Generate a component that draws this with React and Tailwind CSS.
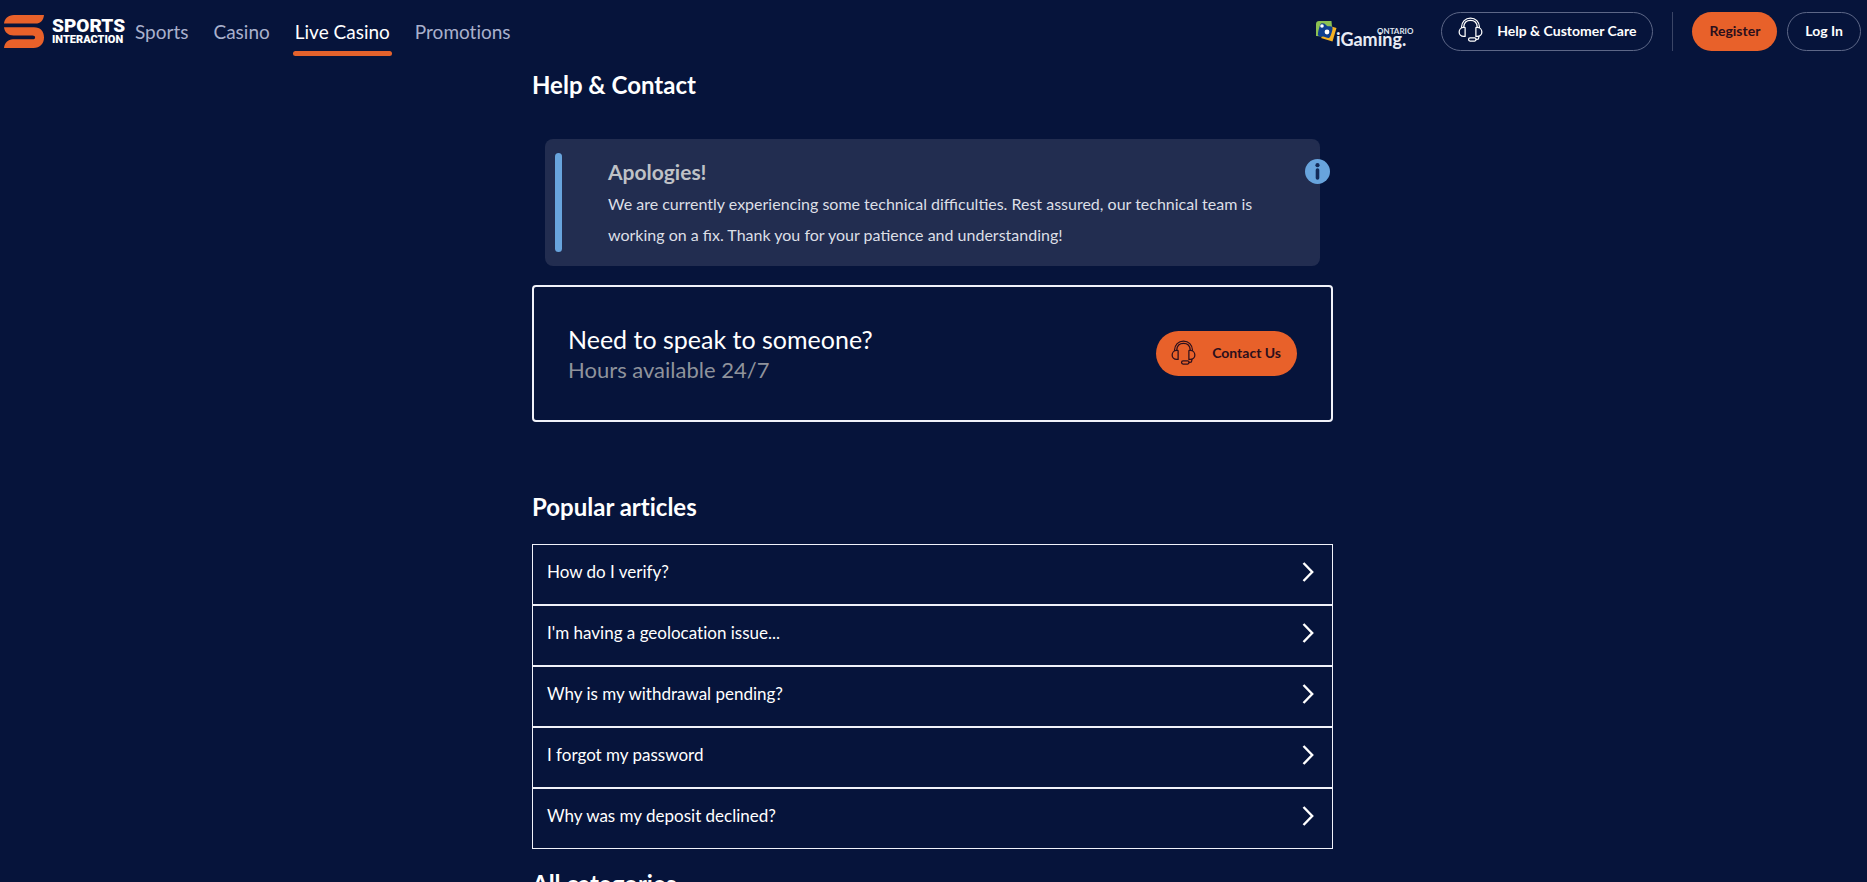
const navItems = [
  { label: "Sports" },
  { label: "Casino" },
  { label: "Live Casino", active: true },
  { label: "Promotions" },
];

const articles = [
  "How do I verify?",
  "I'm having a geolocation issue...",
  "Why is my withdrawal pending?",
  "I forgot my password",
  "Why was my deposit declined?",
];

function Headset({ className }) {
  return (
    <svg viewBox="0 0 26 26" className={className} fill="none" stroke="currentColor" strokeWidth="1.3" strokeLinejoin="round" strokeLinecap="round" aria-hidden="true">
      <path d="M3.6 10.8C3.8 4.9 7.7 1.2 13 1.2s9.200 3.700 9.400 9.600" />
      <path d="M6 10.400C6.300 6.300 9 3.600 13 3.600s6.700 2.700 7 6.800" />
      <path d="M7.400 11.400v8.800H6C3 20.200 1.200 18 1.200 15.600S3 10.800 6 10.800h.9c.3 0 .5.200.5.600z" />
      <path d="M18.600 11.400v8.800H20c3 0 4.800-2.200 4.800-4.600s-1.800-4.800-4.800-4.800h-.9c-.3 0-.5.200-.5.600z" />
      <path d="M21.600 20.200v1.300c0 1.100-.7 1.700-1.800 1.700h-1" />
      <rect x="11" y="21.800" width="7.800" height="3.200" rx="1.500" />
    </svg>
  );
}

function Brand() {
  return (
    <a href="#home" aria-label="Sports Interaction" className="flex items-center gap-2">
      <svg viewBox="0 0 40 33" className="h-[33px] w-10" fill="#e8612a" aria-hidden="true">
        <path d="M40 0H10C4 0 .4 3.600 0 8.600h31.500C36.500 8.600 39.600 5 40 0z" />
        <path d="M0 12.300h30c6.500 0 10 4 10 10.200S36 33 29.500 33H0c.5-5 4-8.700 9-8.700h19.500c1.600 0 2.600-.7 2.600-1.900s-1-1.900-2.600-1.900H9.500c-5 0-9-3-9.500-8.200z" />
      </svg>
      <span className="flex w-[72px] flex-col items-start font-['Roboto',sans-serif] whitespace-nowrap text-white">
        <span className="text-[19px] leading-[17px] font-black">SPORTS</span>
        <span className="text-[11px] leading-[12px] font-black">INTERACTION</span>
      </span>
    </a>
  );
}

function IGaming() {
  return (
    <svg viewBox="0 0 100 40" className="h-10 w-[100px]" role="img" aria-label="iGaming Ontario">
      <path d="M14 14l6.500 2-4 13.500L5 26z" fill="#f4b223" />
      <path d="M3 9h12.500l.5 6-9 9.500L0 24V12c0-1.800 1.200-3 3-3z" fill="#8cc152" />
      <path d="M5 11.500c4-1 5 2 6 2.500s5-.5 5.500 1.500-2 10-3.500 10.500-4.500-1.500-6-1.500-4.500.5-5-1.500S4 12 5 11.500z" fill="#0f3f8f" />
      <circle cx="6" cy="14" r="1.800" fill="#fff" />
      <circle cx="11" cy="20" r="2.400" fill="#fff" />
      <text x="61" y="22" fill="#dfe3ee" fontFamily="Lato, sans-serif" fontWeight="700" fontSize="8">ONTARIO</text>
      <text x="20" y="34" fill="#e8ebf4" fontFamily="Lato, sans-serif" fontWeight="700" fontSize="18">iGaming.</text>
    </svg>
  );
}

export default function App() {
  return (
    <div className="h-screen overflow-hidden bg-[#06143b] font-['Lato',sans-serif] text-white">
      <header className="flex h-[63px] items-center justify-between pr-1.5 pl-1">
        <div className="flex items-center gap-2">
          <Brand />
          <nav className="flex gap-[19px] [font-variant-ligatures:none]">
            {navItems.map((item) => (
              <a
                key={item.label}
                href="#nav"
                className={
                  item.active
                    ? "flex flex-col px-[3px] pt-3 text-[19px] leading-6 text-white"
                    : "flex flex-col px-[3px] pt-3 text-[19px] leading-6 text-[#a9b0cc]"
                }
              >
                {item.label}
                <span className={item.active ? "-mx-[2px] mt-[7px] h-[5px] rounded-full bg-[#e4622c]" : "mt-[7px] h-[5px]"} />
              </a>
            ))}
          </nav>
        </div>
        <div className="flex items-center">
          <IGaming />
          <button className="ml-[25px] flex h-[39px] items-center gap-3.5 rounded-full border border-[#5d6787] px-4 pb-0.5 text-[14px] font-bold">
            <Headset className="-mt-0.5 size-[25px]" />
            Help &amp; Customer Care
          </button>
          <div className="mx-[19px] h-[39px] w-px bg-[#3a4566]" />
          <button className="h-[39px] rounded-full bg-[#e8612a] px-[17px] pb-0.5 text-[14px] font-bold text-[#2c0f1c]">Register</button>
          <button className="ml-2.5 h-[39px] rounded-full border border-[#5d6787] px-[17px] pb-0.5 text-[14px] font-bold">Log In</button>
        </div>
      </header>

      <main className="pr-0.5">
        <div className="mx-auto max-w-[801px] [font-variant-ligatures:none]">
          <h1 className="pt-[7px] text-[24px] leading-[30px] font-bold">Help &amp; Contact</h1>

          <section className="relative mx-[13px] mt-[39px] flex gap-[46px] rounded-lg bg-[#222d50] px-2.5 py-3.5">
            <div className="w-[7px] shrink-0 rounded-full bg-[#68a4dd]" />
            <div className="pt-0.5 pr-12 pb-0.5">
              <h2 className="text-[21px] leading-[33px] font-bold text-[#bfc1c6]">Apologies!</h2>
              <p className="text-[16px] leading-[31px] text-[#dcdfe6] [font-variant-ligatures:normal]">
                We are currently experiencing some technical difficulties. Rest assured, our technical team is working on a fix. Thank you for your patience and understanding!
              </p>
            </div>
            <svg viewBox="0 0 25 25" className="absolute top-5 -right-2.5 size-[25px]" aria-hidden="true">
              <circle cx="12.500" cy="12.500" r="12.500" fill="#68a4dd" />
              <circle cx="12.500" cy="6.200" r="2.100" fill="#132a58" />
              <path d="M12.500 11v8" stroke="#132a58" strokeWidth="3.600" strokeLinecap="round" />
            </svg>
          </section>

          <section className="mt-[19px] flex h-[137px] items-center justify-between rounded border-2 border-[#f0f2fa] px-[34px]">
            <div className="pt-0.5">
              <h2 className="text-[25px] leading-[30px]">Need to speak to someone?</h2>
              <p className="text-[22px] leading-8 text-[#8f939c]">Hours available 24/7</p>
            </div>
            <button className="flex h-[45px] items-center gap-4 rounded-full bg-[#e8612a] pr-4 pb-0.5 pl-[15px] text-[14px] font-bold text-[#2c0f1c]">
              <Headset className="size-[25px]" />
              Contact Us
            </button>
          </section>

          <h2 className="mt-[70px] text-[24px] leading-[30px] font-bold">Popular articles</h2>
          <ul className="mt-[22px]">
            {articles.map((title) => (
              <li key={title}>
                <a href="#article" className="flex h-[61px] items-center justify-between border border-[#f0f2fa] pr-[18px] pb-1.5 pl-3.5 text-[17px]">
                  {title}
                  <svg viewBox="0 0 12 20" className="h-5 w-3" fill="none" stroke="currentColor" strokeWidth="2.400" aria-hidden="true">
                    <path d="M1.500 1l8.700 9-8.700 9" />
                  </svg>
                </a>
              </li>
            ))}
          </ul>
          <h2 className="mt-5 text-[24px] leading-[30px] font-bold">All categories</h2>
        </div>
      </main>
    </div>
  );
}
